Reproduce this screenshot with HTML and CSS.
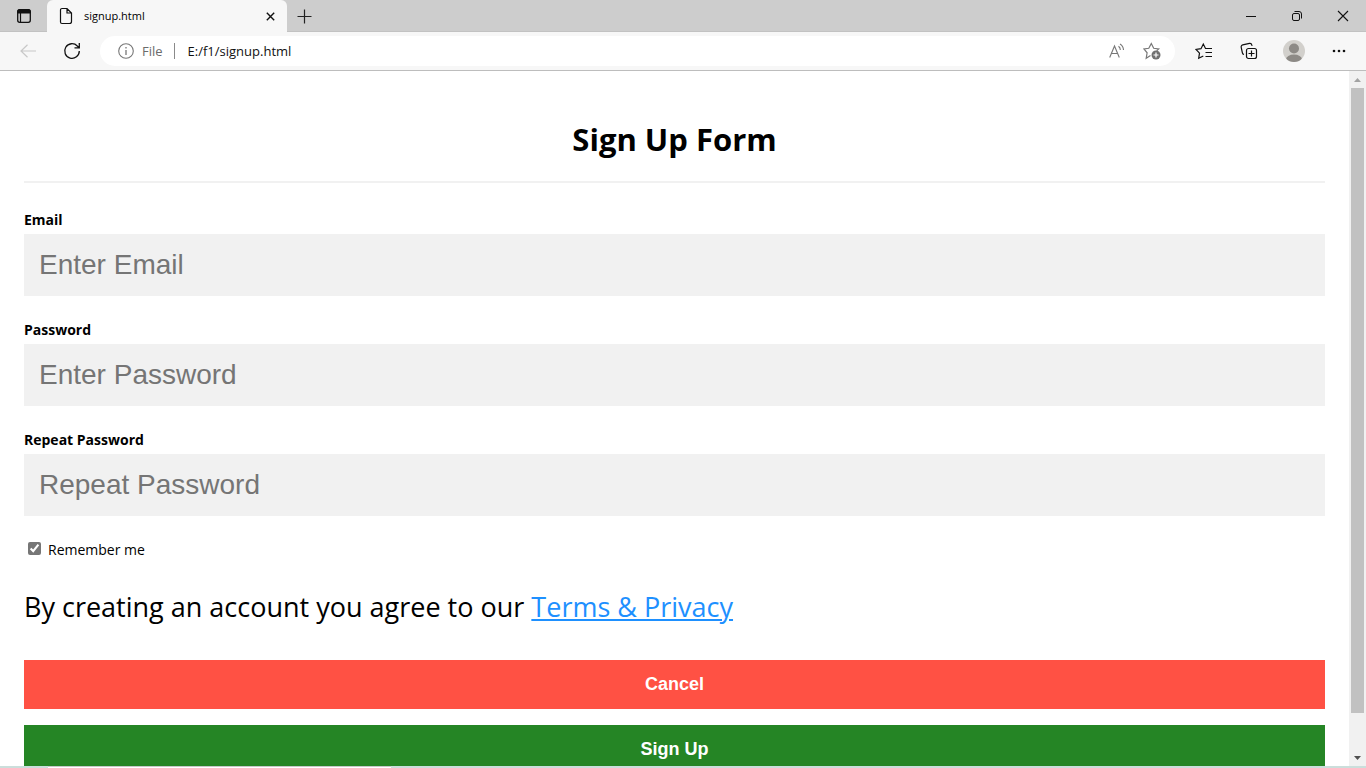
FILE: index.html
```html
<!DOCTYPE html>
<html lang="en">
<head>
<meta charset="utf-8">
<meta name="viewport" content="width=device-width, initial-scale=1">
<title>signup.html</title>
<link rel="stylesheet" href="styles.css">
</head>
<body>
<header class="browser">
  <div class="tabbar">
    <button class="icon-btn tab-actions" type="button" aria-label="Tab actions">
      <svg width="16" height="16" viewBox="0 0 16 16"><path d="M1.700 5V3.500a2 2 0 0 1 2-2h8.600a2 2 0 0 1 2 2V5z" fill="#111" stroke="#111"/><rect x="1.700" y="1.700" width="12.600" height="12.600" rx="2" fill="none" stroke="#111" stroke-width="1.300"/><path d="M4.500 5v9" stroke="#111" stroke-width="1.200"/></svg>
    </button>
    <div class="tab">
      <svg width="14" height="18" viewBox="0 0 14 18" fill="none" stroke="#111" stroke-width="1.200"><path d="M3 1.500h5l4.500 4.500v8.500a2 2 0 0 1-2 2H3a1.500 1.500 0 0 1-1.500-1.500V3A1.500 1.500 0 0 1 3 1.500zM8 1.500V6h4.500"/></svg>
      <span class="tab-title">signup.html</span>
      <button class="icon-btn" type="button" aria-label="Close tab">
        <svg width="9" height="9" viewBox="0 0 9 9" stroke="#111" stroke-width="1.400"><path d="M.8.8l7.400 7.400M8.200.8L.8 8.200"/></svg>
      </button>
    </div>
    <button class="icon-btn new-tab" type="button" aria-label="New tab">
      <svg width="15" height="15" viewBox="0 0 15 15" stroke="#222" stroke-width="1.200"><path d="M7.500 .5v14M.5 7.500h14"/></svg>
    </button>
    <div class="window-controls">
      <button class="icon-btn" type="button" aria-label="Minimize">
        <svg width="12" height="12" viewBox="0 0 12 12" stroke="#111"><path d="M1 6.500h10"/></svg>
      </button>
      <button class="icon-btn" type="button" aria-label="Restore">
        <svg width="12" height="12" viewBox="0 0 12 12" fill="none" stroke="#111"><rect x="1.500" y="3.500" width="7" height="7" rx="1.500"/><path d="M3.500 1.500H8a2.500 2.500 0 0 1 2.500 2.500v4.500"/></svg>
      </button>
      <button class="icon-btn" type="button" aria-label="Close window">
        <svg width="12" height="12" viewBox="0 0 12 12" stroke="#111" stroke-width="1.100"><path d="M1 1l10 10M11 1L1 11"/></svg>
      </button>
    </div>
  </div>
  <div class="toolbar">
    <button class="icon-btn" type="button" aria-label="Back">
      <svg width="16" height="14" viewBox="0 0 16 14" fill="none" stroke="#c8c8c8" stroke-width="1.200"><path d="M16 7H1M7.500 .7L1 7l6.500 6.300"/></svg>
    </button>
    <button class="icon-btn" type="button" aria-label="Refresh">
      <svg width="18" height="18" viewBox="0 0 18 18" fill="none" stroke="#111" stroke-width="1.300"><path d="M16.300 9a7.300 7.300 0 1 1-2-5L16 5.500M16.300 1v4.900h-4.800"/></svg>
    </button>
    <div class="address">
      <svg width="16" height="16" viewBox="0 0 16 16" fill="none" stroke="#777" stroke-width="1.100"><circle cx="8" cy="8" r="7.300"/><path d="M8 7v5M8 4v1.400" stroke-width="1.300"/></svg>
      <span class="scheme">File</span>
      <input class="url" type="text" aria-label="Address" value="E:/f1/signup.html">
      <button class="icon-btn" type="button" aria-label="Read aloud">
        <svg width="16" height="16" viewBox="0 0 16 16" fill="none" stroke="#777" stroke-width="1.100"><path d="M.7 14.500L5.500 3l4.800 11.500M2.300 10.500h6.400M9.500 3.200a4.500 4.500 0 0 1 1.800 3.800M11 1a7.500 7.500 0 0 1 3.500 6"/></svg>
      </button>
      <button class="icon-btn" type="button" aria-label="Add to favorites">
        <svg width="18" height="18" viewBox="0 0 18 18" fill="none" stroke="#777" stroke-width="1.200"><path d="M7.500 13.500l-4.300 2.800.9-5.500L.9 7l4.900-.7L8.300 1.500l2.400 4.800 5 .7-2 1.800"/><circle cx="13" cy="13" r="4.500" fill="#707070" stroke="none"/><path d="M13 10.500v5M10.500 13h5" stroke="#fff"/></svg>
      </button>
    </div>
    <div class="tools">
      <button class="icon-btn" type="button" aria-label="Favorites">
        <svg width="18" height="18" viewBox="0 0 18 18" fill="none" stroke="#111" stroke-width="1.200"><path d="M8.300 14l-4.600 2.300.8-5.100L1 7.500l5-.8L8.300 2l2.200 4.500h6.500M10.500 10.500H17M10.500 14.500H17"/></svg>
      </button>
      <button class="icon-btn" type="button" aria-label="Collections">
        <svg width="18" height="18" viewBox="0 0 18 18" fill="none" stroke="#111" stroke-width="1.200"><path d="M4 12.500a2 2 0 0 1-1.600-1.600L1.200 5.300a2 2 0 0 1 1.500-2.400l6.800-1.500a2 2 0 0 1 2.300 1.500l.3 1"/><rect x="6.500" y="6.500" width="10" height="10" rx="2"/><path d="M11.500 8.500v6M8.500 11.500h6"/></svg>
      </button>
      <button class="icon-btn" type="button" aria-label="Profile">
        <svg width="22" height="22" viewBox="0 0 22 22"><defs><clipPath id="disc"><circle cx="11" cy="11" r="11"/></clipPath></defs><g clip-path="url(#disc)"><path d="M0 0h22v22H0z" fill="#d2d0cc"/><circle cx="11" cy="8.500" r="5" fill="#8d8a86"/><ellipse cx="11" cy="19.500" rx="8" ry="5" fill="#8d8a86"/></g></svg>
      </button>
      <button class="icon-btn" type="button" aria-label="Settings and more">
        <svg width="14" height="4" viewBox="0 0 14 4" fill="#111"><circle cx="2" cy="2" r="1.300"/><circle cx="7" cy="2" r="1.300"/><circle cx="12" cy="2" r="1.300"/></svg>
      </button>
    </div>
  </div>
</header>
<div class="viewport">
  <main class="page">
    <form class="signup">
      <h1 class="title">Sign Up Form</h1>
      <hr class="rule">
      <div class="field">
        <label class="label" for="email">Email</label>
        <input class="input" id="email" type="text" placeholder="Enter Email">
      </div>
      <div class="field">
        <label class="label" for="psw">Password</label>
        <input class="input" id="psw" type="password" placeholder="Enter Password">
      </div>
      <div class="field">
        <label class="label" for="psw-repeat">Repeat Password</label>
        <input class="input" id="psw-repeat" type="password" placeholder="Repeat Password">
      </div>
      <label class="remember"><input class="check" type="checkbox" checked>Remember me</label>
      <p class="terms">By creating an account you agree to our <a class="link" href="#">Terms &amp; Privacy</a></p>
      <div class="actions">
        <button class="btn cancel" type="button">Cancel</button>
        <button class="btn submit" type="submit">Sign Up</button>
      </div>
    </form>
  </main>
  <div class="scrollbar" aria-hidden="true">
    <svg class="arrow" viewBox="0 0 17 17"><path d="M5 11l3.500-4 3.500 4z" fill="#a3a3a3"/></svg>
    <div class="track"><div class="thumb"></div></div>
    <svg class="arrow" viewBox="0 0 17 17"><path d="M5 7l3.500 4L12 7z" fill="#505050"/></svg>
  </div>
</div>
<div class="edge"><div class="edge-search"></div></div>
</body>
</html>
```
FILE: styles.css
```css
* { box-sizing: border-box; }

body {
  margin: 0;
  height: 100vh;
  display: flex;
  flex-direction: column;
  overflow: hidden;
  background: #fff;
  color: #000;
  font-family: "Open Sans", "Noto Sans", sans-serif;
}

svg { display: block; flex: none; }

.icon-btn {
  display: flex;
  align-items: center;
  justify-content: center;
  flex: none;
  padding: 0;
  border: 0;
  background: none;
}

/* Browser frame */
.browser {
  flex: none;
  background: #f7f7f7;
  border-bottom: 1px solid #bdbdbd;
}

.tabbar {
  display: flex;
  height: 32px;
  background: #cdcdcd;
  box-shadow: inset 0 -1px #c2c2c2;
}

.tab-actions { width: 47px; }

.tab {
  display: flex;
  align-items: center;
  width: 240px;
  padding: 0 12px;
  gap: 11px;
  background: #f7f7f7;
  border-radius: 6px 6px 0 0;
}

.tab-title {
  flex: 1;
  font-size: 11px;
  line-height: 14px;
}

.new-tab { width: 35px; }

.window-controls {
  display: flex;
  margin-left: auto;
}

.window-controls .icon-btn { width: 46px; }

.toolbar {
  display: flex;
  align-items: center;
  height: 38px;
  padding-left: 6px;
}

.toolbar > .icon-btn { width: 44px; }

.address {
  flex: 1;
  display: flex;
  align-items: center;
  height: 30px;
  margin-left: 6px;
  padding: 0 14px 0 18px;
  border-radius: 15px;
  background: #fff;
  font-size: 13px;
}

.scheme {
  margin: 0 11px 0 8px;
  color: #6b6b6b;
}

.url {
  flex: 1;
  min-width: 0;
  height: 16px;
  padding: 0 0 0 13px;
  border: 0;
  border-left: 1px solid #8a8a8a;
  background: none;
  color: #111;
  font: inherit;
}

.address .icon-btn { margin-left: 18px; }

.tools {
  display: flex;
  align-items: center;
  padding: 0 5px 0 6px;
}

.tools .icon-btn { width: 45px; }

/* Page area */
.viewport {
  flex: 1;
  min-height: 0;
  display: flex;
}

.page {
  flex: 1;
  overflow: hidden;
}

.signup { padding: 46px 24px; }

.title {
  margin: 0 0 20px;
  font-size: 31px;
  line-height: 44px;
  text-align: center;
}

.rule {
  margin: 0 0 26px;
  border: 0;
  border-top: 2px solid #f1f1f1;
}

.field { margin-bottom: 23px; }

.label {
  display: block;
  margin-bottom: 4px;
  font-size: 14px;
  font-weight: 700;
  line-height: 21px;
}

.input {
  display: block;
  width: 100%;
  padding: 15px;
  border: 0;
  border-radius: 0;
  background: #f1f1f1;
  font-family: "Liberation Sans", Arial, sans-serif;
  font-size: 28px;
  line-height: 32px;
}

.input::placeholder { color: #757575; }

.remember {
  display: flex;
  align-items: center;
  gap: 7px;
  font-size: 14px;
  line-height: 21px;
}

.check {
  width: 13px;
  height: 13px;
  margin: 0 0 2px 4px;
  accent-color: #767676;
}

.terms {
  margin: 27px 0 33px;
  font-size: 27px;
  line-height: 40px;
}

.link {
  color: dodgerblue;
  text-decoration-thickness: 2px;
  text-underline-offset: 2px;
}

.actions {
  display: grid;
  gap: 16px;
}

.btn {
  padding: 14px 20px;
  border: 0;
  color: #fff;
  font-family: "Liberation Sans", Arial, sans-serif;
  font-size: 18px;
  font-weight: 700;
  line-height: 21px;
}

.cancel { background: #ff5144; }

.submit { background: #258525; }

/* Scrollbar */
.scrollbar {
  display: flex;
  flex-direction: column;
  width: 17px;
  background: #f1f1f1;
}

.arrow { width: 17px; height: 17px; }

.track { flex: 1; padding: 0 2px; }

.thumb {
  height: 94.5%;
  background: #c1c1c1;
}

/* Top edge of the desktop taskbar */
.edge {
  flex: none;
  height: 2px;
  padding-left: 48px;
  background: #cbdedb;
}

.edge-search {
  width: 26%;
  height: 2px;
  background: #fff;
  border-top: 1px solid #c8c8c8;
}
```
